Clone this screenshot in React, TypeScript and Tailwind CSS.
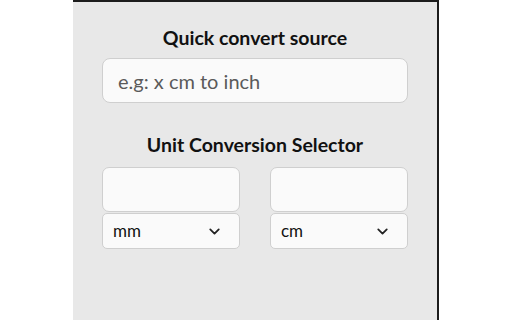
import { ChevronDown } from 'lucide-react';

function UnitColumn({ unit }: { unit: string }) {
  return (
    <div className="flex flex-col gap-px w-[138px]">
      <div className="h-[45px] rounded-[7px] border border-[#cfcfcf] bg-[#fafafa]" />
      <div className="h-[36px] rounded-[5px] border border-[#cfcfcf] bg-[#fafafa] flex items-center justify-between pl-[10px] pr-[16px]">
        <span className="text-[17px] text-[#111]">{unit}</span>
        <ChevronDown className="w-[17px] h-[17px] text-[#222]" strokeWidth={2.5} />
      </div>
    </div>
  );
}

export default function App() {
  return (
    <div className="w-[512px] h-[320px] bg-white flex" style={{ fontFamily: 'Lato, "Open Sans", sans-serif' }}>
      <div className="ml-[73px] w-[366px] h-full bg-[#e8e8e8] border-t-[2px] border-r-[2px] border-[#1c1c1c] flex flex-col items-center pt-[23px]">
        <h1 className="text-[19.5px] font-bold text-[#111] leading-[26px]">Quick convert source</h1>
        <div className="mt-[7px] w-[306px] h-[45px] rounded-[8px] border border-[#cfcfcf] bg-[#fafafa] flex items-center pl-[15px]">
          <span className="text-[20px] text-[#5a5a5a]">e.g: x cm to inch</span>
        </div>
        <h2 className="mt-[29px] text-[19.5px] font-bold text-[#111] leading-[26px]">Unit Conversion Selector</h2>
        <div className="mt-[9px] w-[306px] flex justify-between">
          <UnitColumn unit="mm" />
          <UnitColumn unit="cm" />
        </div>
      </div>
    </div>
  );
}
